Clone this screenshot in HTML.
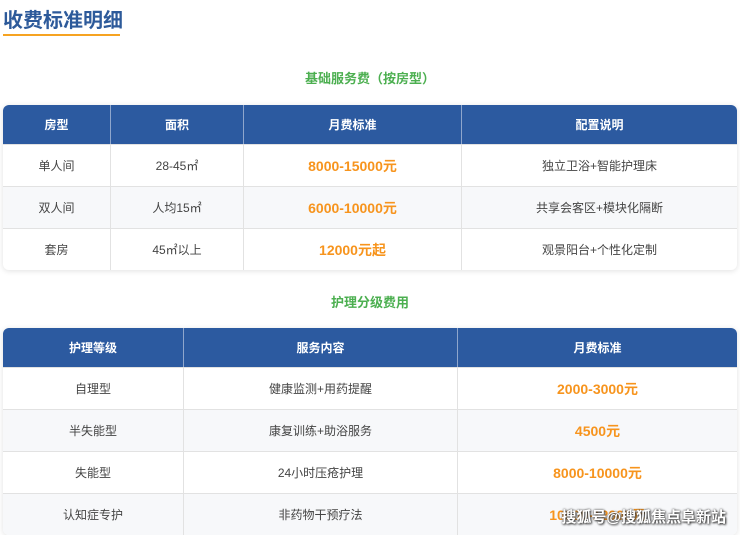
<!DOCTYPE html>
<html><head><meta charset="utf-8"><style>
*{margin:0;padding:0;box-sizing:border-box}
body{width:740px;height:534px;overflow:hidden;background:#fff;font-family:"Liberation Sans","Noto Sans CJK SC",sans-serif;position:relative}
.t{position:absolute;left:3px;top:4px;font-size:20px;font-weight:bold;color:#2d5a9a}
.ul{position:absolute;left:3px;top:34px;width:117px;height:2px;background:#f6a321}
.sub{position:absolute;left:0;width:740px;text-align:center;font-size:13px;font-weight:bold;color:#4caf50}
table{position:absolute;left:3px;width:734px;border-collapse:separate;border-spacing:0;border-radius:6px;overflow:hidden;box-shadow:0 1px 6px rgba(0,0,0,.12);font-size:12px;color:#444}
th{background:#2c5aa0;color:#fff;font-weight:bold;height:39px;border-right:1px solid #8fa6cc}
td{height:42px;text-align:center;border-right:1px solid #e2e2e2;border-top:1px solid #e2e2e2}
th:last-child,td:last-child{border-right:none}
tr:nth-child(odd) td{background:#f7f8fa}
.o{color:#f7941d;font-weight:bold;font-size:14px}
.wm{position:absolute;right:14px;top:506px;font-size:15px;font-weight:bold;color:#fff;text-shadow:0 0 2px #333,1px 1px 2px #333}
</style></head><body>
<div class="t">收费标准明细</div><div class="ul"></div>
<div class="sub" style="top:68px">基础服务费（按房型）</div>
<table style="top:105px">
<tr><th style="width:108px">房型</th><th style="width:133px">面积</th><th style="width:218px">月费标准</th><th>配置说明</th></tr>
<tr><td>单人间</td><td>28-45㎡</td><td class="o">8000-15000元</td><td>独立卫浴+智能护理床</td></tr>
<tr><td>双人间</td><td>人均15㎡</td><td class="o">6000-10000元</td><td>共享会客区+模块化隔断</td></tr>
<tr><td>套房</td><td>45㎡以上</td><td class="o">12000元起</td><td>观景阳台+个性化定制</td></tr>
</table>
<div class="sub" style="top:292px">护理分级费用</div>
<table style="top:328px">
<tr><th style="width:181px">护理等级</th><th style="width:274px">服务内容</th><th>月费标准</th></tr>
<tr><td>自理型</td><td>健康监测+用药提醒</td><td class="o">2000-3000元</td></tr>
<tr><td>半失能型</td><td>康复训练+助浴服务</td><td class="o">4500元</td></tr>
<tr><td>失能型</td><td>24小时压疮护理</td><td class="o">8000-10000元</td></tr>
<tr><td>认知症专护</td><td>非药物干预疗法</td><td class="o">10000-12000元</td></tr>
</table>
<div class="wm">搜狐号@搜狐焦点阜新站</div>
</body></html>
